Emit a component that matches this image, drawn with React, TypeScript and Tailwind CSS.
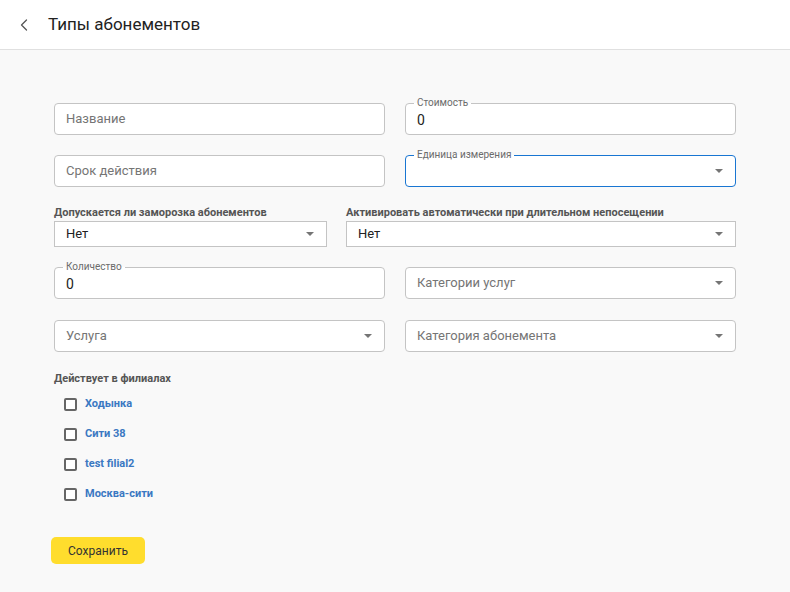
// Типы абонементов — форма создания типа абонемента

import { ChevronLeft } from "lucide-react"

const FONT = "font-['Roboto','Liberation_Sans',sans-serif]"

// ── Мелкие детали ───────────────────────────────────────────
function Caret() {
  return <span className="w-0 h-0 border-l-[4px] border-r-[4px] border-t-[4px] border-l-transparent border-r-transparent border-t-[#757575]" />
}

function Field({
  placeholder,
  label,
  value,
  select,
  focused,
}: {
  placeholder?: string
  label?: string
  value?: string
  select?: boolean
  focused?: boolean
}) {
  return (
    <div
      className={`relative h-[32px] bg-white rounded-[4px] border flex items-center pl-[11px] pr-[12px] ${
        focused ? "border-[#1976d2]" : "border-[#c4c4c4]"
      }`}
    >
      {label && (
        <span className="absolute left-[8px] -top-[7px] px-[3px] text-[10px] leading-[12px] text-[#6b6b6b] bg-[linear-gradient(to_bottom,#f9f9f9_50%,#fff_50%)]">
          {label}
        </span>
      )}
      <span className={`flex-1 ${value ? "text-[14px] text-[#222] pt-[2px]" : "text-[13px] text-[#757575]"}`}>
        {value ?? placeholder}
      </span>
      {select && <Caret />}
    </div>
  )
}

function LabeledSelect({ label, value }: { label: string; value: string }) {
  return (
    <div className="flex flex-col">
      <span className="text-[11px] leading-[14px] font-bold text-[#555] mb-[1px]">{label}</span>
      <div className="h-[26px] bg-white border border-[#c4c4c4] flex items-center pl-[11px] pr-[12px]">
        <span className="flex-1 text-[13px] text-[#222]">{value}</span>
        <Caret />
      </div>
    </div>
  )
}

const branches = ["Ходынка", "Сити 38", "test filial2", "Москва-сити"]

// ── Страница ────────────────────────────────────────────────
export default function App() {
  return (
    <div className={`min-h-[592px] bg-[#f9f9f9] ${FONT}`}>
      {/* шапка */}
      <div className="h-[50px] bg-white border-b border-[#e0e0e0] flex items-center">
        <ChevronLeft className="w-[20px] h-[20px] ml-[14px] text-[#555]" strokeWidth={1.5} />
        <span className="ml-[14px] text-[17px] text-[#222]">Типы абонементов</span>
      </div>

      {/* форма */}
      <div className="w-[682px] ml-[54px] pt-[53px] flex flex-col">
        <div className="grid grid-cols-2 gap-x-[20px] gap-y-[20px]">
          <Field placeholder="Название" />
          <Field label="Стоимость" value="0" />
          <Field placeholder="Срок действия" />
          <Field label="Единица измерения" value="" select focused />
        </div>

        <div className="grid grid-cols-[273px_1fr] gap-x-[19px] mt-[19px]">
          <LabeledSelect label="Допускается ли заморозка абонементов" value="Нет" />
          <LabeledSelect label="Активировать автоматически при длительном непосещении" value="Нет" />
        </div>

        <div className="grid grid-cols-2 gap-x-[20px] gap-y-[21px] mt-[20px]">
          <Field label="Количество" value="0" />
          <Field placeholder="Категории услуг" select />
          <Field placeholder="Услуга" select />
          <Field placeholder="Категория абонемента" select />
        </div>

        <span className="mt-[20px] text-[11px] leading-[14px] font-bold text-[#555]">Действует в филиалах</span>
        <div className="flex flex-col mt-[3px]">
          {branches.map((b) => (
            <label key={b} className="h-[30px] flex items-center pl-[10px]">
              <span className="w-[13px] h-[13px] border-2 border-[#666] rounded-[2px] bg-white" />
              <span className="ml-[8px] text-[11px] font-bold text-[#3b78c2]">{b}</span>
            </label>
          ))}
        </div>

        <button className="mt-[28px] -ml-[3px] w-[94px] h-[27px] rounded-[5px] bg-[#ffdd2d] text-[12px] text-[#333]">
          Сохранить
        </button>
      </div>
    </div>
  )
}
